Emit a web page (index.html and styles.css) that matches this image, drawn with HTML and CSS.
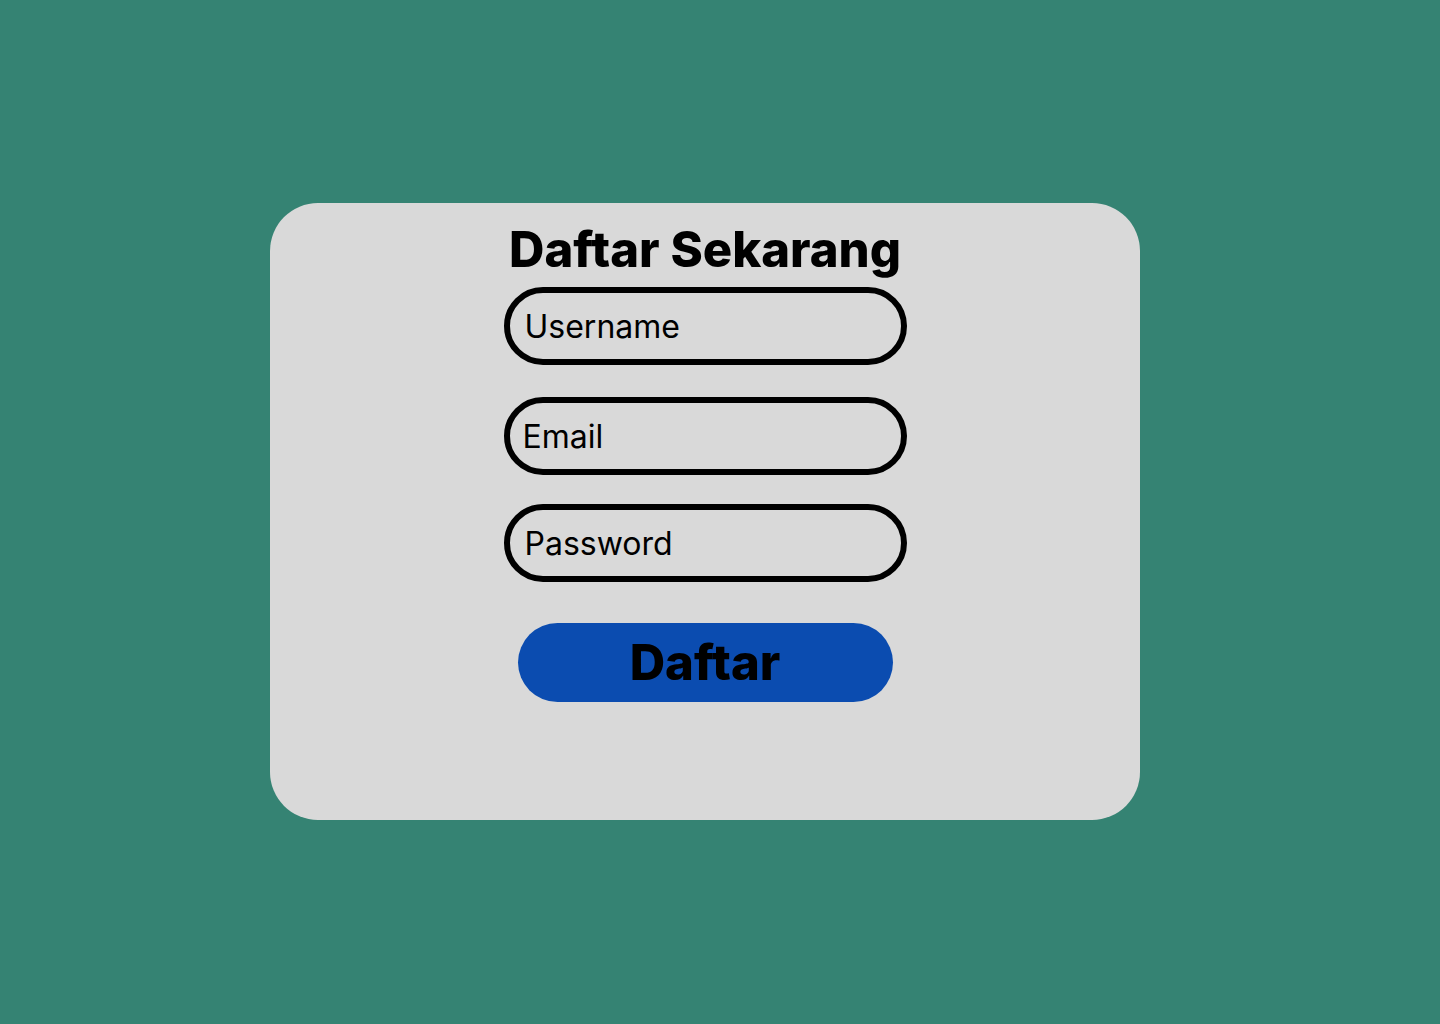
FILE: index.html
```html
<!DOCTYPE html>
<html lang="id">
<head>
<meta charset="utf-8">
<title>Daftar Sekarang</title>
<link rel="stylesheet" href="styles.css">
</head>
<body>
<main class="page">
  <form class="card">
    <h1 class="title">Daftar Sekarang</h1>
    <input class="field field-user" type="text" placeholder="Username">
    <input class="field field-email" type="email" placeholder="Email">
    <input class="field field-pass" type="password" placeholder="Password">
    <button class="submit" type="button">Daftar</button>
  </form>
</main>
</body>
</html>
```
FILE: styles.css
```css
html, body {
  margin: 0;
  padding: 0;
}
body {
  background: #358373;
  font-family: Inter, "Noto Sans", sans-serif;
  width: 1440px;
  height: 1024px;
  overflow: hidden;
}
.page {
  padding: 203px 0 0 270px;
}
.card {
  box-sizing: border-box;
  width: 870px;
  height: 617px;
  background: #d9d9d9;
  border-radius: 48px;
  padding-top: 18px;
  display: flex;
  flex-direction: column;
  align-items: center;
}
.title {
  margin: 0;
  font-size: 49px;
  font-weight: 800;
  line-height: 58px;
  color: #000;
}
.field {
  box-sizing: border-box;
  width: 403px;
  height: 78px;
  border: 6px solid #000;
  border-radius: 40px;
  background: transparent;
  font-family: Inter, "Noto Sans", sans-serif;
  font-size: 32px;
  color: #000;
  padding: 0 0 0 15px;
  outline: none;
  margin: 0;
}
.field::placeholder {
  color: #000;
  opacity: 1;
}
.field-user {
  margin-top: 8px;
}
.field-email {
  margin-top: 32px;
  padding-left: 13px;
}
.field-pass {
  margin-top: 29px;
  padding-left: 15px;
}
.submit {
  margin-top: 41px;
  width: 375px;
  height: 79px;
  border: none;
  border-radius: 40px;
  background: #0b4cb0;
  color: #000;
  font-family: Inter, "Noto Sans", sans-serif;
  font-size: 49px;
  font-weight: 800;
  line-height: 1;
  padding: 0;
  cursor: pointer;
}
```
